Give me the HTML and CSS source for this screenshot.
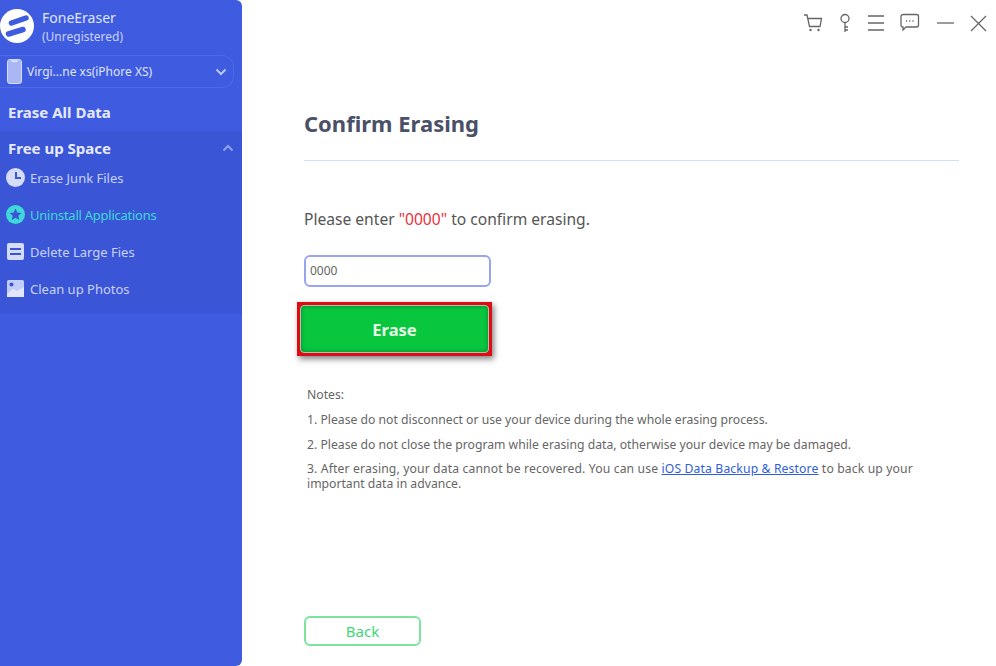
FILE: index.html
```html
<!DOCTYPE html>
<html>
<head>
    <title>FoneEraser</title>
    <link rel="stylesheet" href="styles.css">
</head>
<body>
<div class="app">
    <!-- Sidebar -->
    <div class="sidebar">
        <div class="brand">
            <svg class="brand-logo" width="34" height="34" viewBox="0 0 34 34">
                <circle cx="17" cy="17" r="17" fill="#fff"/>
                <path d="M11.500 14 L26 9" fill="none" stroke="#3f5be0" stroke-width="5.500" stroke-linecap="round"/>
                <path d="M8.500 25 L23 20.500" fill="none" stroke="#3f5be0" stroke-width="5.500" stroke-linecap="round"/>
            </svg>
            <div class="brand-text">
                <div class="brand-name">FoneEraser</div>
                <div class="brand-status">(Unregistered)</div>
            </div>
        </div>
        <div class="device">
            <svg width="15" height="25" viewBox="0 0 15 25">
                <rect x="0.500" y="0.500" width="14" height="24" rx="2.500" fill="#a9b8f5" stroke="#d5dcfa"/>
                <rect x="4.500" y="1.500" width="6" height="1.500" fill="#e4e9fd"/>
            </svg>
            <span class="device-name">Virgi...ne xs(iPhore XS)</span>
            <svg class="device-arrow" width="12" height="8" viewBox="0 0 12 8">
                <path d="M1.500 1.500 L6 6 L10.500 1.500" fill="none" stroke="#b9c6f7" stroke-width="2"/>
            </svg>
        </div>
        <div class="nav-title erase-all">Erase All Data</div>
        <div class="nav-group">
            <div class="nav-title group-head">
                <span>Free up Space</span>
                <svg width="12" height="8" viewBox="0 0 12 8">
                    <path d="M1.500 6.500 L6 2 L10.500 6.500" fill="none" stroke="#8fa2ee" stroke-width="2"/>
                </svg>
            </div>
            <div class="nav-item">
                <svg width="19" height="19" viewBox="0 0 19 19">
                    <circle cx="9.500" cy="9.500" r="9.500" fill="#d5dcfa"/>
                    <path d="M10 4 V10 H15" fill="none" stroke="#3a55d6" stroke-width="2"/>
                </svg>
                <span>Erase Junk Files</span>
            </div>
            <div class="nav-item active">
                <svg width="19" height="19" viewBox="0 0 19 19">
                    <circle cx="9.500" cy="9.500" r="9.500" fill="#3fd8d8"/>
                    <path d="M9.500 3.500 L11.300 7.600 L15.500 8 L12.300 10.800 L13.300 15 L9.500 12.800 L5.700 15 L6.700 10.800 L3.500 8 L7.700 7.600Z" fill="#3a55d6"/>
                </svg>
                <span>Uninstall Applications</span>
            </div>
            <div class="nav-item">
                <svg width="19" height="19" viewBox="0 0 19 19">
                    <rect x="1" y="1" width="17" height="17" rx="2" fill="#d5dcfa"/>
                    <rect x="4" y="6" width="11" height="2" fill="#3a55d6"/>
                    <rect x="4" y="11" width="11" height="2" fill="#3a55d6"/>
                </svg>
                <span>Delete Large Fies</span>
            </div>
            <div class="nav-item">
                <svg width="19" height="19" viewBox="0 0 19 19">
                    <rect x="1" y="1" width="17" height="17" rx="1.500" fill="#c3cef8"/>
                    <path d="M1 15 L7 10 L11 12 L18 8 V18 H1Z" fill="#e2e7fc"/>
                    <circle cx="5.500" cy="5.500" r="2" fill="#3a55d6"/>
                </svg>
                <span>Clean up Photos</span>
            </div>
        </div>
    </div>

    <!-- Main content -->
    <div class="main">
        <div class="toolbar">
            <svg width="20" height="20" viewBox="0 0 20 20">
                <path d="M1 2 H4 L6.500 13.500 H17 L18.500 5.500 H5" fill="none" stroke="#666" stroke-width="1.300"/>
                <circle cx="7.500" cy="17" r="1.200" fill="#666"/>
                <circle cx="15.500" cy="17" r="1.200" fill="#666"/>
            </svg>
            <svg width="12" height="20" viewBox="0 0 12 20">
                <circle cx="6" cy="5.500" r="4" fill="none" stroke="#666" stroke-width="1.300"/>
                <path d="M6 9.500 V19 M6 14 H9 M6 17 H9" fill="none" stroke="#666" stroke-width="1.300"/>
            </svg>
            <svg width="16" height="18" viewBox="0 0 16 18">
                <path d="M0 2 H16 M0 9 H16 M0 16 H16" fill="none" stroke="#666" stroke-width="1.400"/>
            </svg>
            <svg width="20" height="20" viewBox="0 0 20 20">
                <path d="M3.500 1.500 H16.500 Q18.500 1.500 18.500 3.500 V12 Q18.500 14 16.500 14 H6 L3 17 V14 Q1 14 1 12 V3.500 Q1 1.500 3.500 1.500Z" fill="none" stroke="#666" stroke-width="1.300"/>
                <path d="M6 8 H7.200 M9.200 8 H10.400 M12.400 8 H13.600" stroke="#666" stroke-width="1.400"/>
            </svg>
            <svg width="17" height="4" viewBox="0 0 17 4">
                <path d="M0 2 H17" stroke="#666" stroke-width="1.300"/>
            </svg>
            <svg width="17" height="17" viewBox="0 0 17 17">
                <path d="M1 1 L16 16 M16 1 L1 16" stroke="#666" stroke-width="1.300"/>
            </svg>
        </div>

        <div class="page-title">Confirm Erasing</div>
        <p class="prompt">Please enter <span class="code">"0000"</span> to confirm erasing.</p>
        <input class="code-input" type="text" value="0000">
        <div class="erase-wrap">
            <button class="erase-button">Erase</button>
        </div>

        <div class="notes">
            <p>Notes:</p>
            <p>1. Please do not disconnect or use your device during the whole erasing process.</p>
            <p>2. Please do not close the program while erasing data, otherwise your device may be damaged.</p>
            <p><span class="note-long">3. After erasing, your data cannot be recovered. You can use <a href="#">iOS Data Backup &amp; Restore</a> to back up your</span><br>important data in advance.</p>
        </div>

        <button class="back-button">Back</button>
    </div>
</div>
</body>
</html>
```

FILE: styles.css
```css
/* Body styles */
html, body {
    margin: 0;
    padding: 0;
    height: 100%;
    background-color: #fff;
    font-family: "Noto Sans", "Open Sans", sans-serif;
    overflow: hidden;
}

.app {
    display: flex;
    height: 666px;
}

/* Sidebar */
.sidebar {
    width: 242px;
    flex-shrink: 0;
    background-color: #3f5be0;
    border-radius: 0 6px 6px 0;
    color: #dfe5fb;
}

.brand {
    display: flex;
    align-items: center;
    gap: 8px;
    height: 54px;
    padding-bottom: 2px;
    box-sizing: border-box;
}

.brand-text {
    padding-top: 2px;
}

.brand-name {
    font-size: 14px;
    line-height: 19px;
}

.brand-status {
    font-size: 12px;
    line-height: 19px;
    color: #c9d2f8;
}

.device {
    display: flex;
    align-items: center;
    box-sizing: border-box;
    height: 33px;
    margin: 1px 8px 0 0;
    padding-left: 7px;
    padding-right: 6px;
    gap: 5px;
    border: 1px solid #4f6ae6;
    border-left: none;
    border-radius: 0 12px 12px 0;
}

.device-name {
    font-size: 12px;
    flex: 1;
}

.nav-title {
    font-size: 15px;
    font-weight: bold;
    color: #e6eafc;
}

.erase-all {
    height: 36px;
    line-height: 34px;
    padding-left: 8px;
    margin-top: 7px;
}

.nav-group {
    height: 183px;
    background-color: #3a55d6;
}

.group-head {
    display: flex;
    align-items: center;
    justify-content: space-between;
    box-sizing: border-box;
    height: 36px;
    padding: 0 8px 2px;
}

.nav-item {
    display: flex;
    align-items: center;
    gap: 5px;
    height: 37px;
    padding-left: 6px;
    font-size: 13px;
    color: #c9d2f8;
}

.group-head + .nav-item {
    margin-top: -8px;
}

.nav-item.active {
    color: #3fd8d8;
    letter-spacing: -0.25px;
}

/* Main content */
.main {
    flex: 1;
    display: flex;
    flex-direction: column;
    align-items: flex-start;
    padding: 0 37px 20px 62px;
    color: #555;
}

.toolbar {
    align-self: flex-end;
    display: flex;
    align-items: center;
    gap: 16.5px;
    height: 46px;
    margin-right: -28px;
}

.page-title {
    align-self: stretch;
    margin-top: 65px;
    padding-bottom: 25px;
    font-size: 22px;
    line-height: 24px;
    font-weight: bold;
    color: #4a5068;
    border-bottom: 1px solid #d5dcf5;
}

.prompt {
    margin: 46px 0 0;
    font-size: 15.6px;
    line-height: 24px;
    color: #555;
}

.code {
    color: #e8323c;
}

.code-input {
    width: 187px;
    height: 32px;
    box-sizing: border-box;
    margin-top: 24px;
    padding: 0 4px 2px;
    border: 2px solid #98a5ee;
    border-radius: 6px;
    font-family: inherit;
    font-size: 12px;
    color: #666;
    outline: none;
}

.erase-wrap {
    margin: 15px 0 0 -7px;
    padding: 2px;
    background-color: #e00a14;
    border: 1px solid #e00a14;
    box-shadow: 2px 3px 6px rgba(0, 0, 0, 0.5);
}

.erase-button {
    display: block;
    width: 189px;
    height: 48px;
    border: 1px solid #aac4b0;
    border-radius: 4px;
    background-color: #09c63f;
    box-shadow: inset 0 0 4px rgba(0, 90, 30, 0.6);
    color: #e4fbe6;
    font-family: inherit;
    font-size: 16.5px;
    font-weight: bold;
}

.notes {
    margin: 31px 0 0 3px;
    font-size: 12.2px;
    line-height: 15px;
    color: #666;
}

.notes p {
    margin: 0 0 10px;
}

.notes p:nth-child(3) {
    margin-bottom: 9px;
}

.note-long {
    letter-spacing: 0.13px;
}

.notes a {
    color: #2f5fd8;
}

.back-button {
    width: 117px;
    height: 30px;
    margin-top: auto;
    background-color: #fff;
    border: 2px solid #7fe3a0;
    border-radius: 6px;
    font-family: inherit;
    font-size: 15px;
    color: #3fd878;
}
```
